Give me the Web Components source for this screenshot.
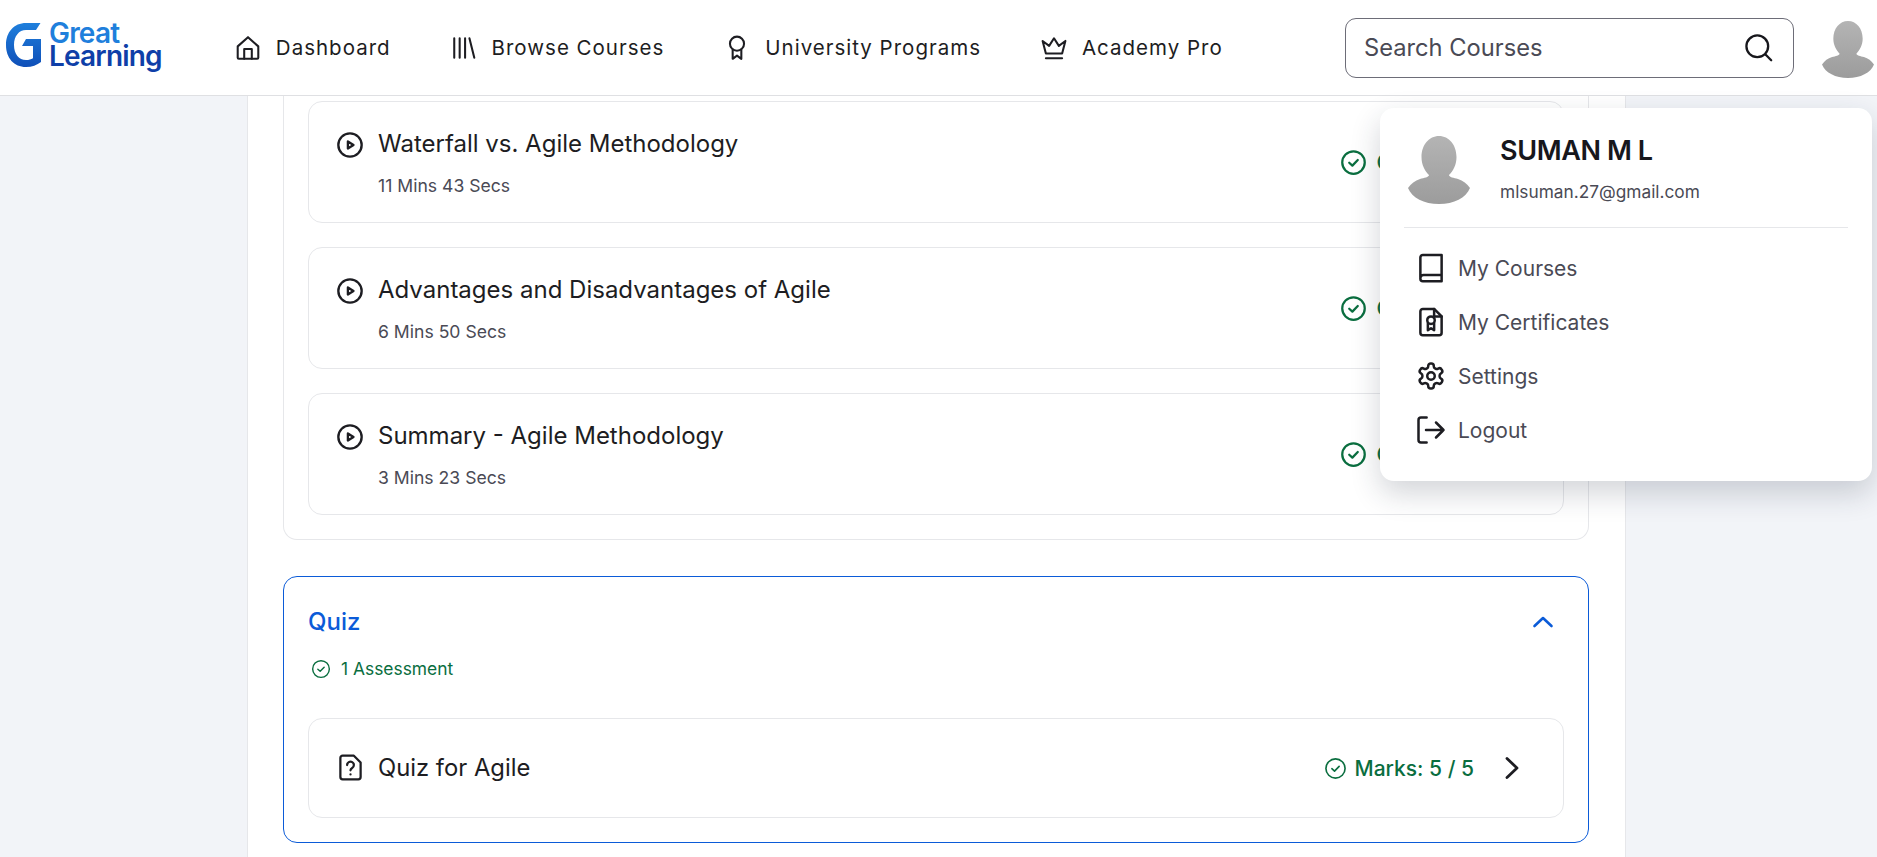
<!DOCTYPE html>
<html lang="en">
<head>
<meta charset="utf-8">
<title>Great Learning</title>
<style>
  html, body { margin: 0; height: 100%; overflow: hidden; }
  body { background: #f2f4f8; font-family: Inter, "Liberation Sans", sans-serif; color: #1d1d22; }
</style>
</head>
<body>
<gl-header></gl-header>
<gl-page>
  <gl-section>
    <gl-lesson label="Waterfall vs. Agile Methodology" duration="11 Mins 43 Secs"></gl-lesson>
    <gl-lesson label="Advantages and Disadvantages of Agile" duration="6 Mins 50 Secs"></gl-lesson>
    <gl-lesson label="Summary - Agile Methodology" duration="3 Mins 23 Secs"></gl-lesson>
  </gl-section>
  <gl-section heading="Quiz" sub="1 Assessment">
    <gl-quiz-row label="Quiz for Agile" marks="Marks: 5 / 5"></gl-quiz-row>
  </gl-section>
</gl-page>
<gl-user-menu name="SUMAN M L" email="mlsuman.27@gmail.com"></gl-user-menu>

<script>
// stroke icons, all on a 24 box
const ICONS = {
  home: '<path d="M2.500 21V10.500L12 2l9.500 8.500V21a1 1 0 0 1-1 1h-17a1 1 0 0 1-1-1z"/><path d="M8.500 22v-9h7v9"/>',
  library: '<path d="M3 3v18M8 3v18M13 3v18M17 3l4.500 18"/>',
  badge: '<circle cx="12" cy="8" r="6.500"/><path d="M8 13.500V22l4-3 4 3v-8.500"/>',
  crown: '<path d="M4.500 17 1.500 5.500l6 4.500L12 3l4.500 7 6-4.500L19.500 17z"/><path d="M4.500 21.500h15"/>',
  search: '<circle cx="11" cy="11" r="9"/><path d="m18 18 4.500 4.500"/>',
  play: '<circle cx="12" cy="12" r="10"/><path d="M10.200 9 15 12l-4.800 3z"/>',
  check: '<circle cx="12" cy="12" r="10"/><path d="m8.200 12.200 2.800 2.600 4.800-5"/>',
  quiz: '<path d="M5 1.500h10l6 6V20.500a2 2 0 0 1-2 2H5a2 2 0 0 1-2-2v-17a2 2 0 0 1 2-2z"/><path d="M9 9.800a3 3 0 1 1 4.500 2.600c-1 .6-1.500 1.100-1.500 2.100"/><path d="M12 18v.2"/>',
  up: '<path d="m3.500 16 8.500-8 8.500 8"/>',
  right: '<path d="m7 2.500 10 9.500-10 9.500"/>',
  book: '<path d="M3.500 19.500V3.500a2 2 0 0 1 2-2h15v21h-15a2 2 0 0 1-2-2V20A2.500 2.500 0 0 1 6 17.500h14.500"/>',
  cert: '<path d="M5.500 1.500h9l6 6v13a2 2 0 0 1-2 2h-13a2 2 0 0 1-2-2v-17a2 2 0 0 1 2-2z"/><path d="M14.500 1.500v6h6"/><circle cx="12" cy="10.500" r="3"/><path d="M9.500 13v5.500l2.500-1.500 2.500 1.500V13"/>',
  gear: '<circle cx="12" cy="12" r="3"/><path d="M12.220 2h-.44a2 2 0 0 0-2 2v.18a2 2 0 0 1-1 1.730l-.43.250a2 2 0 0 1-2 0l-.15-.08a2 2 0 0 0-2.730.730l-.22.380a2 2 0 0 0 .730 2.730l.15.100a2 2 0 0 1 1 1.720v.510a2 2 0 0 1-1 1.740l-.15.090a2 2 0 0 0-.730 2.730l.22.380a2 2 0 0 0 2.730.730l.15-.08a2 2 0 0 1 2 0l.43.250a2 2 0 0 1 1 1.730V20a2 2 0 0 0 2 2h.44a2 2 0 0 0 2-2v-.18a2 2 0 0 1 1-1.730l.43-.25a2 2 0 0 1 2 0l.15.080a2 2 0 0 0 2.730-.730l.22-.39a2 2 0 0 0-.730-2.730l-.15-.08a2 2 0 0 1-1-1.740v-.5a2 2 0 0 1 1-1.740l.15-.09a2 2 0 0 0 .730-2.730l-.22-.38a2 2 0 0 0-2.730-.730l-.15.080a2 2 0 0 1-2 0l-.43-.25a2 2 0 0 1-1-1.730V4a2 2 0 0 0-2-2z"/>',
  logout: '<path d="M8.500 2H4a2 2 0 0 0-2 2v16a2 2 0 0 0 2 2h4.500"/><path d="M8 12h14M16 6l6 6-6 6"/>'
};

class GlIcon extends HTMLElement {
  constructor() {
    super();
    const size = this.getAttribute('size') || 24;
    const sw = this.getAttribute('stroke') || 2;
    this.attachShadow({ mode: 'open' }).innerHTML = `
      <style>
        :host { display: inline-flex; flex: none; width: ${size}px; height: ${size}px; color: inherit; }
        svg { width: 100%; height: 100%; fill: none; stroke: currentColor; stroke-width: ${sw}; stroke-linecap: round; stroke-linejoin: round; }
      </style>
      <svg viewBox="0 0 24 24">${ICONS[this.getAttribute('name')] || ''}</svg>
    `;
  }
}
customElements.define('gl-icon', GlIcon);

class GlAvatar extends HTMLElement {
  constructor() {
    super();
    const w = this.getAttribute('w');
    const h = this.getAttribute('h');
    const id = 'g' + Math.random().toString(36).slice(2);
    this.attachShadow({ mode: 'open' }).innerHTML = `
      <style>:host { display: block; flex: none; width: ${w}px; height: ${h}px; }</style>
      <svg width="${w}" height="${h}" viewBox="0 0 62 68">
        <defs><linearGradient id="${id}" x1="0" y1="0" x2="0" y2="1">
          <stop offset="0" stop-color="#b4b4b4"/><stop offset="1" stop-color="#9c9c9c"/>
        </linearGradient></defs>
        <path fill="url(#${id})" d="M31 0c10 0 17.500 9 17.500 21 0 8-3.500 14-7.500 18 0 2 5 3 9 4 5 1.500 9 4.500 12 9-4 10-16 16-31 16S4 62 0 52c3-4.500 7-7.500 12-9 4-1 9-2 9-4-4-4-7.500-10-7.500-18C13.500 9 21 0 31 0z"/>
      </svg>
    `;
  }
}
customElements.define('gl-avatar', GlAvatar);

class GlLogo extends HTMLElement {
  constructor() {
    super();
    this.attachShadow({ mode: 'open' }).innerHTML = `
      <style>
        :host { display: flex; align-items: center; gap: 7px; flex: none; margin-top: -5px; }
        .words { display: flex; flex-direction: column; font-weight: 600; font-size: 28px; line-height: 23px; letter-spacing: -.8px; }
        .great { color: #1f7fdc; }
        .learning { color: #0f3fa8; }
      </style>
      <svg width="36" height="44" viewBox="0 0 36 44">
        <defs>
          <linearGradient id="gg" x1="0" y1="0" x2="0" y2="1">
            <stop offset="0" stop-color="#1f7fdc"/><stop offset="1" stop-color="#0f4fb8"/>
          </linearGradient>
        </defs>
        <path fill="url(#gg)" d="M34.500 0 30 7H20C13 7 8 13 8 22s5 15 12 15c3 0 5-.6 7-1.800V23H16l4-7h15v23c-4 3-9 5-15 5C8 44 0 35 0 22S8 0 20 0z"/>
      </svg>
      <div class="words"><span class="great">Great</span><span class="learning">Learning</span></div>
    `;
  }
}
customElements.define('gl-logo', GlLogo);

class GlNavItem extends HTMLElement {
  constructor() {
    super();
    this.attachShadow({ mode: 'open' }).innerHTML = `
      <style>
        :host { display: flex; align-items: center; gap: 15px; font-size: 20.500px; font-weight: 400; letter-spacing: 1px; color: #1d1d22; white-space: nowrap; }
      </style>
      <gl-icon name="${this.getAttribute('icon')}" size="26" stroke="1.900"></gl-icon>
      <slot></slot>
    `;
  }
}
customElements.define('gl-nav-item', GlNavItem);

class GlSearch extends HTMLElement {
  constructor() {
    super();
    this.attachShadow({ mode: 'open' }).innerHTML = `
      <style>
        :host { display: flex; align-items: center; justify-content: space-between; box-sizing: border-box; width: 449px; height: 60px; padding: 0 20px 0 18px; border: 1px solid #6d6d78; border-radius: 11px; flex: none; }
        span { font-size: 23.700px; color: #4a4a55; }
        gl-icon { color: #17171c; }
      </style>
      <span>Search Courses</span>
      <gl-icon name="search" size="29" stroke="1.900"></gl-icon>
    `;
  }
}
customElements.define('gl-search', GlSearch);

class GlHeader extends HTMLElement {
  constructor() {
    super();
    this.attachShadow({ mode: 'open' }).innerHTML = `
      <style>
        :host { display: flex; align-items: center; box-sizing: border-box; height: 96px; padding: 0 3px 0 6px; background: #fff; border-bottom: 1px solid #dfe0e3; }
        nav { display: flex; align-items: center; gap: 60px; margin-left: 73px; flex: 1; }
        gl-avatar { margin-left: 28px; margin-top: 4px; }
      </style>
      <gl-logo></gl-logo>
      <nav>
        <gl-nav-item icon="home">Dashboard</gl-nav-item>
        <gl-nav-item icon="library">Browse Courses</gl-nav-item>
        <gl-nav-item icon="badge">University Programs</gl-nav-item>
        <gl-nav-item icon="crown">Academy Pro</gl-nav-item>
      </nav>
      <gl-search></gl-search>
      <gl-avatar w="52" h="57"></gl-avatar>
    `;
  }
}
customElements.define('gl-header', GlHeader);

class GlPage extends HTMLElement {
  constructor() {
    super();
    this.attachShadow({ mode: 'open' }).innerHTML = `
      <style>
        :host { display: flex; flex-direction: column; gap: 36px; box-sizing: border-box; width: 1379px; margin-left: 247px; height: 761px; padding: 0 35px; background: #fff; border-left: 1px solid #e6e7ea; border-right: 1px solid #e6e7ea; overflow: hidden; }
      </style>
      <slot></slot>
    `;
  }
}
customElements.define('gl-page', GlPage);

class GlSection extends HTMLElement {
  constructor() {
    super();
    const heading = this.getAttribute('heading');
    const sub = this.getAttribute('sub');
    this.attachShadow({ mode: 'open' }).innerHTML = `
      <style>
        :host { display: flex; flex-direction: column; gap: 24px; box-sizing: border-box; width: 1306px; flex: none; padding: 5px 24px 24px; border: 1px solid #e6e7ea; border-top: 0; border-radius: 0 0 14px 14px; background: #fff; }
        :host([heading]) { gap: 0; padding: 31px 24px 24px; border: 1px solid #0b5bd8; border-radius: 14px; }
        .head { display: flex; align-items: center; justify-content: space-between; color: #0b5bd8; font-size: 24px; font-weight: 500; line-height: 28px; }
        .head gl-icon { margin-right: 9px; }
        .sub { display: flex; align-items: center; gap: 10px; margin: 21px 0 37px; padding-left: 3px; color: #0a6e3f; font-size: 17.400px; line-height: 24px; }
      </style>
      ${heading ? `
        <div class="head"><span>${heading}</span><gl-icon name="up" size="24" stroke="2.600"></gl-icon></div>
        <div class="sub"><gl-icon name="check" size="20" stroke="1.700"></gl-icon><span>${sub}</span></div>
      ` : ''}
      <slot></slot>
    `;
  }
}
customElements.define('gl-section', GlSection);

class GlLesson extends HTMLElement {
  constructor() {
    super();
    this.attachShadow({ mode: 'open' }).innerHTML = `
      <style>
        :host { display: flex; align-items: center; justify-content: space-between; box-sizing: border-box; height: 122px; padding: 0 27px; border: 1px solid #e6e7ea; border-radius: 14px; background: #fff; }
        .main { display: grid; grid-template-columns: 28px 1fr; column-gap: 14px; align-items: center; }
        .main gl-icon { margin-top: 3px; }
        .title { font-size: 24px; line-height: 32px; color: #1d1d22; }
        .time { grid-column: 2; margin-top: 15px; font-size: 17.600px; line-height: 22px; color: #4a4a55; }
        .status { display: flex; align-items: center; gap: 9px; color: #0a6e3f; font-size: 21px; font-weight: 500; margin-right: 50px; }
      </style>
      <div class="main">
        <gl-icon name="play" size="28" stroke="2"></gl-icon>
        <div class="title">${this.getAttribute('label')}</div>
        <div class="time">${this.getAttribute('duration')}</div>
      </div>
      <div class="status"><gl-icon name="check" size="27" stroke="2"></gl-icon><span>Completed</span></div>
    `;
  }
}
customElements.define('gl-lesson', GlLesson);

class GlQuizRow extends HTMLElement {
  constructor() {
    super();
    this.attachShadow({ mode: 'open' }).innerHTML = `
      <style>
        :host { display: flex; align-items: center; justify-content: space-between; box-sizing: border-box; height: 100px; padding: 0 39px 0 28px; border: 1px solid #e6e7ea; border-radius: 14px; background: #fff; }
        .main { display: flex; align-items: center; gap: 14px; font-size: 23.800px; margin-top: -1px; }
        .side { display: flex; align-items: center; }
        .marks { display: flex; align-items: center; gap: 8px; color: #0a6e3f; font-size: 21px; font-weight: 500; margin-right: 26px; }
      </style>
      <div class="main"><gl-icon name="quiz" size="27" stroke="2"></gl-icon><span>${this.getAttribute('label')}</span></div>
      <div class="side">
        <div class="marks"><gl-icon name="check" size="23" stroke="1.700"></gl-icon><span>${this.getAttribute('marks')}</span></div>
        <gl-icon name="right" size="24" stroke="2.800"></gl-icon>
      </div>
    `;
  }
}
customElements.define('gl-quiz-row', GlQuizRow);

class GlMenuItem extends HTMLElement {
  constructor() {
    super();
    this.attachShadow({ mode: 'open' }).innerHTML = `
      <style>
        :host { display: flex; align-items: center; gap: 12px; height: 54px; padding-left: 12px; font-size: 21px; color: #4a4a55; }
        gl-icon { color: #1d1d22; }
      </style>
      <gl-icon name="${this.getAttribute('icon')}" size="30" stroke="2"></gl-icon>
      <slot></slot>
    `;
  }
}
customElements.define('gl-menu-item', GlMenuItem);

class GlUserMenu extends HTMLElement {
  constructor() {
    super();
    this.attachShadow({ mode: 'open' }).innerHTML = `
      <style>
        :host { position: absolute; left: 1380px; top: 108px; width: 492px; height: 373px; box-sizing: border-box; padding: 27px 24px 0; background: #fff; border-radius: 14px; box-shadow: 0 12px 30px rgba(30, 40, 60, .2); }
        .who { display: flex; gap: 30px; height: 93px; box-sizing: border-box; padding-left: 4px; border-bottom: 1px solid #e6e7ea; }
        .who gl-avatar { margin-top: 1px; }
        .name { font-size: 27px; font-weight: 600; letter-spacing: -.4px; line-height: 32px; color: #17171c; }
        .email { font-size: 17.300px; line-height: 22px; margin-top: 14px; color: #4a4a55; }
        .items { margin-top: 13px; }
      </style>
      <div class="who">
        <gl-avatar w="62" h="68"></gl-avatar>
        <div>
          <div class="name">${this.getAttribute('name')}</div>
          <div class="email">${this.getAttribute('email')}</div>
        </div>
      </div>
      <div class="items">
        <gl-menu-item icon="book">My Courses</gl-menu-item>
        <gl-menu-item icon="cert">My Certificates</gl-menu-item>
        <gl-menu-item icon="gear">Settings</gl-menu-item>
        <gl-menu-item icon="logout">Logout</gl-menu-item>
      </div>
    `;
  }
}
customElements.define('gl-user-menu', GlUserMenu);
</script>
</body>
</html>
